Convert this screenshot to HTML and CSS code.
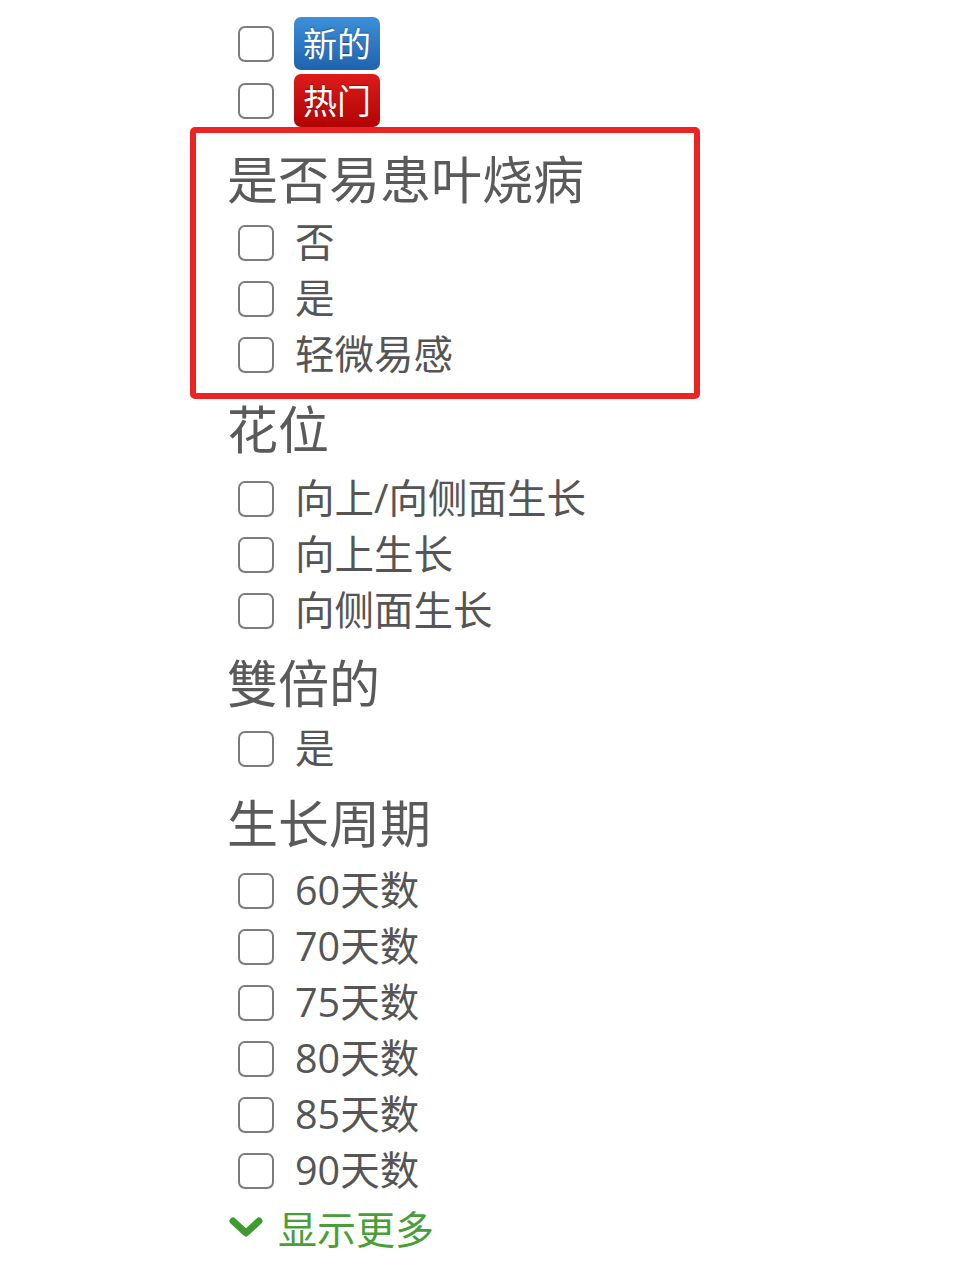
FILE: index.html
```html
<!DOCTYPE html>
<html lang="zh">
<head>
<meta charset="utf-8">
<title>筛选</title>
<link rel="stylesheet" href="styles.css">
</head>
<body>
<div class="filters">
  <div class="group group-tags">
    <label class="option"><span class="box"></span><span class="badge badge-blue">新的</span></label>
    <label class="option"><span class="box"></span><span class="badge badge-red">热门</span></label>
  </div>

  <div class="group group-leaf highlight">
    <h3 class="title">是否易患叶烧病</h3>
    <label class="option"><span class="box"></span><span class="text">否</span></label>
    <label class="option"><span class="box"></span><span class="text">是</span></label>
    <label class="option"><span class="box"></span><span class="text">轻微易感</span></label>
  </div>

  <div class="group group-flower">
    <h3 class="title">花位</h3>
    <label class="option"><span class="box"></span><span class="text">向上/向侧面生长</span></label>
    <label class="option"><span class="box"></span><span class="text">向上生长</span></label>
    <label class="option"><span class="box"></span><span class="text">向侧面生长</span></label>
  </div>

  <div class="group group-double">
    <h3 class="title">雙倍的</h3>
    <label class="option"><span class="box"></span><span class="text">是</span></label>
  </div>

  <div class="group group-cycle">
    <h3 class="title">生长周期</h3>
    <label class="option"><span class="box"></span><span class="text">60天数</span></label>
    <label class="option"><span class="box"></span><span class="text">70天数</span></label>
    <label class="option"><span class="box"></span><span class="text">75天数</span></label>
    <label class="option"><span class="box"></span><span class="text">80天数</span></label>
    <label class="option"><span class="box"></span><span class="text">85天数</span></label>
    <label class="option"><span class="box"></span><span class="text">90天数</span></label>
    <a class="more" href="#">
      <svg class="chevron" width="36" height="22" viewBox="0 0 36 22"><polyline points="5,5 18,17 31,5" fill="none" stroke="#3f9b2f" stroke-width="7" stroke-linecap="round" stroke-linejoin="round"/></svg>
      <span>显示更多</span>
    </a>
  </div>
</div>
</body>
</html>
```

FILE: styles.css
```css
html, body {
  margin: 0;
  padding: 0;
  background: #ffffff;
}

body {
  width: 960px;
  height: 1280px;
  overflow: hidden;
  font-family: "Open Sans", "Noto Sans CJK SC", sans-serif;
  color: #555555;
}

.filters {
  padding: 15px 0 0 227px;
}

.group {
  display: flex;
  flex-direction: column;
  align-items: flex-start;
}

.title {
  margin: 16px 0 10px 0;
  font-size: 51px;
  line-height: 60px;
  font-weight: normal;
  color: #5a5a5a;
  letter-spacing: 0;
}

.group-leaf .title {
  margin-top: 20px;
  margin-bottom: 6px;
}

.group-flower .title {
  margin-top: 16px;
  margin-bottom: 12px;
}

.group-double .title {
  margin-top: 14px;
  margin-bottom: 8px;
}

.group-cycle .title {
  margin-top: 16px;
  margin-bottom: 10px;
}

.option {
  display: flex;
  align-items: center;
  height: 56px;
  padding-left: 11px;
  gap: 21px;
  font-size: 39.5px;
  line-height: 1;
}

.group-tags .option {
  height: 57px;
}

.box {
  box-sizing: border-box;
  width: 36px;
  height: 36px;
  border: 2.5px solid #7c7c7c;
  border-radius: 7px;
  background: #ffffff;
  flex: none;
}

.text {
  color: #555555;
  white-space: nowrap;
}

.badge {
  display: inline-flex;
  align-items: center;
  height: 53px;
  padding: 0 9px;
  margin-left: -1px;
  border-radius: 7px;
  color: #ffffff;
  font-size: 34px;
  text-shadow: 0 -1px 1px rgba(0, 0, 0, 0.35);
}

.badge-blue {
  background: linear-gradient(#3d8fd9, #1f63ad);
}

.badge-red {
  background: linear-gradient(#dd1b1b, #b10404);
}

.highlight {
  position: relative;
}

.highlight::after {
  content: "";
  position: absolute;
  left: -37px;
  top: -2px;
  width: 510px;
  height: 272px;
  box-sizing: border-box;
  border: 6px solid #ec2323;
  border-radius: 5px;
  pointer-events: none;
}

.more {
  display: flex;
  align-items: center;
  height: 56px;
  gap: 14px;
  margin-top: 0;
  padding-left: 1px;
  color: #4a9e3a;
  font-size: 39px;
  text-decoration: none;
}

.chevron {
  display: block;
  flex: none;
}
```
